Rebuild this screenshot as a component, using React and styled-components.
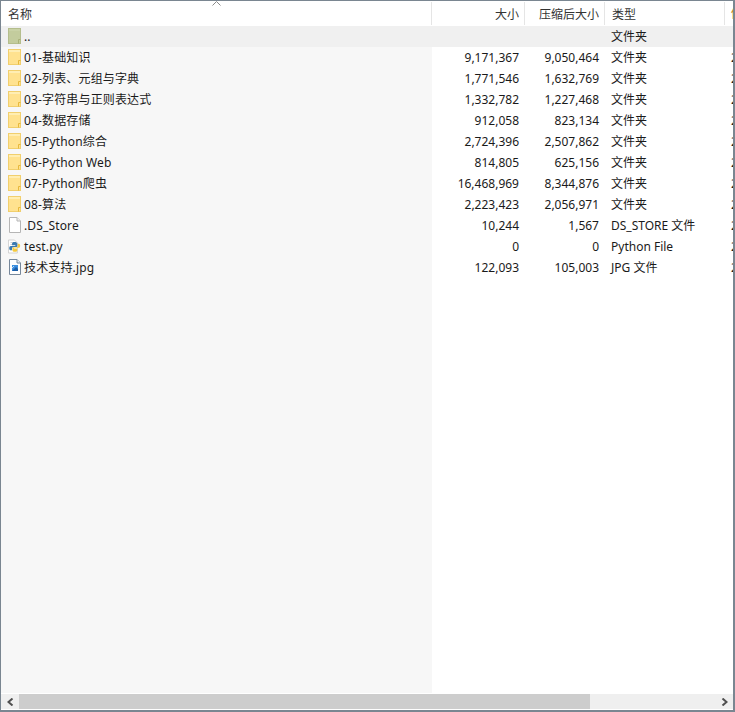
import React from 'react';
import styled, { createGlobalStyle } from 'styled-components';

const GlobalStyle = createGlobalStyle`
  html, body {
    margin: 0;
    padding: 0;
    background: #fff;
  }
  * {
    box-sizing: border-box;
  }
`;

const COLS = '431px 93px 80px 120px 1fr';

const Window = styled.div`
  width: 735px;
  height: 712px;
  display: flex;
  flex-direction: column;
  overflow: hidden;
  background: #fff;
  color: #1a1a1a;
  border: 1px solid #7a8691;
  border-right-width: 2px;
  border-bottom-width: 2px;
  font-family: "Noto Sans", "Noto Sans CJK SC", sans-serif;
  font-size: 12px;
`;

const Header = styled.div`
  display: grid;
  grid-template-columns: ${COLS};
  height: 25px;
  flex: none;
  position: relative;
  background: #fff;
`;

const HeadCell = styled.div`
  display: flex;
  align-items: center;
  justify-content: ${(p) => (p.$right ? 'flex-end' : 'flex-start')};
  padding: ${(p) => (p.$right ? '0 5px 0 0' : '0 0 0 7px')};
  margin-top: 1px;
  margin-bottom: 1px;
  border-right: 1px solid #e5e5e5;
  color: #333;
  white-space: nowrap;
  overflow: hidden;
`;

const SortArrow = styled.svg`
  position: absolute;
  left: 211px;
  top: 0;
`;

const List = styled.div`
  flex: 1;
  min-height: 0;
  background: linear-gradient(to right, #f7f7f7 431px, #fff 431px);
`;

const Row = styled.div`
  display: grid;
  grid-template-columns: ${COLS};
  height: 21px;
  background: ${(p) => (p.$up ? '#f0f0f0' : 'transparent')};
`;

const NameCell = styled.div`
  display: flex;
  align-items: center;
  gap: 3px;
  padding: 0 0 1px 7px;
  white-space: nowrap;
  letter-spacing: 0.15px;
`;

const IconBox = styled.span`
  width: 13px;
  height: 16px;
  flex: none;
  display: flex;
  align-items: center;
  justify-content: center;
`;

const NumCell = styled.div`
  display: flex;
  align-items: center;
  justify-content: flex-end;
  padding: 0 6px 1px 0;
`;

const TypeCell = styled.div`
  display: flex;
  align-items: center;
  padding: 0 0 1px 6px;
  white-space: nowrap;
`;

const ClipCell = styled.div`
  display: flex;
  align-items: center;
  padding: 0 0 1px 6px;
  overflow: hidden;
  white-space: nowrap;
  color: ${(p) => p.$color || 'inherit'};
`;

const Scrollbar = styled.div`
  flex: none;
  height: 15px;
  margin: 1px 0;
  display: flex;
  background: #efefef;
`;

const ScrollButton = styled.div`
  width: 18px;
  flex: none;
  display: flex;
  align-items: center;
  justify-content: center;
`;

const Track = styled.div`
  flex: 1;
  min-width: 0;
`;

const Thumb = styled.div`
  height: 100%;
  width: 571px;
  background: #cdcdcd;
`;

const FolderIcon = ({ up }) => (
  <svg width="13" height="16" viewBox="0 0 13 16">
    <rect x="0.5" y="0.5" width="12" height="15" fill={up ? '#c3cc9d' : '#ffe28f'} stroke={up ? '#b4bd8c' : '#f1cf6d'} />
    <rect x="1" y="1" width="11" height="2" fill={up ? '#c9d2a6' : '#ffeeb3'} />
    <path d="M10.500 15.500V11.500H12.500" fill="none" stroke={up ? '#a8b178' : '#e8b93c'} />
  </svg>
);

const FileIcon = () => (
  <svg width="12" height="16" viewBox="0 0 12 16">
    <path d="M0.500 0.500H8L11.500 4V15.500H0.500Z" fill="#fff" stroke="#b5b5b5" />
    <path d="M8 0.500V4H11.500" fill="#f0f0f0" stroke="#b5b5b5" />
  </svg>
);

const PyIcon = () => (
  <svg width="16" height="17" viewBox="0 0 16 17">
    <path d="M0.500 0.500H8L11.500 4V16.500H0.500Z" fill="#fff" stroke="#c9c9c9" />
    <path d="M3 3.500H6M3 6H5" stroke="#c4c4c4" />
    <path d="M8 3C6 3 5 3.800 5 5V7H9V8H3.500C2.200 8 1.500 9 1.500 10.500C1.500 12 2.200 13 3.500 13H5V11C5 9.800 5.800 9 7 9H10C11 9 11.500 8.500 11.500 7.500V5C11.500 3.800 10 3 8 3Z" fill="#3b7ab0" />
    <path d="M8.500 15C10.500 15 11.500 14.200 11.500 13V11H7.500V10H13C14.300 10 15 9 15 7.500C15 6 14.300 5 13 5H12V7.500C12 8.800 11 9.500 10 9.500H7C6 9.500 5.500 10 5.500 11V13C5.500 14.200 6.500 15 8.500 15Z" fill="#f4c93f" />
  </svg>
);

const JpgIcon = () => (
  <svg width="12" height="16" viewBox="0 0 12 16">
    <path d="M0.500 0.500H8L11.500 4V15.500H0.500Z" fill="#fff" stroke="#76879a" />
    <path d="M8 0.500V4H11.500" fill="#e8eef4" stroke="#76879a" />
    <rect x="3" y="6" width="6" height="6" fill="#3c8fe0" />
    <path d="M3 12L7 8L9 10V12Z" fill="#1d5fa8" />
    <path d="M3 9L5 7" stroke="#bcdcf8" />
  </svg>
);

const rows = [
  { name: '01-基础知识', size: '9,171,367', packed: '9,050,464', type: '文件夹', icon: 'folder' },
  { name: '02-列表、元组与字典', size: '1,771,546', packed: '1,632,769', type: '文件夹', icon: 'folder' },
  { name: '03-字符串与正则表达式', size: '1,332,782', packed: '1,227,468', type: '文件夹', icon: 'folder' },
  { name: '04-数据存储', size: '912,058', packed: '823,134', type: '文件夹', icon: 'folder' },
  { name: '05-Python综合', size: '2,724,396', packed: '2,507,862', type: '文件夹', icon: 'folder' },
  { name: '06-Python Web', size: '814,805', packed: '625,156', type: '文件夹', icon: 'folder' },
  { name: '07-Python爬虫', size: '16,468,969', packed: '8,344,876', type: '文件夹', icon: 'folder' },
  { name: '08-算法', size: '2,223,423', packed: '2,056,971', type: '文件夹', icon: 'folder' },
  { name: '.DS_Store', size: '10,244', packed: '1,567', type: 'DS_STORE 文件', icon: 'file' },
  { name: 'test.py', size: '0', packed: '0', type: 'Python File', icon: 'py' },
  { name: '技术支持.jpg', size: '122,093', packed: '105,003', type: 'JPG 文件', icon: 'jpg' },
];

const icons = {
  folder: <FolderIcon />,
  file: <FileIcon />,
  py: <PyIcon />,
  jpg: <JpgIcon />,
};

const App = () => {
  return (
    <Window>
      <GlobalStyle />
      <Header>
        <HeadCell>名称</HeadCell>
        <HeadCell $right>大小</HeadCell>
        <HeadCell $right>压缩后大小</HeadCell>
        <HeadCell>类型</HeadCell>
        <ClipCell $color="#c98a2b">修改时间</ClipCell>
        <SortArrow width="9" height="5" viewBox="0 0 9 5">
          <path d="M0.500 4.500L4.500 0.500L8.500 4.500" fill="none" stroke="#8a8a8a" />
        </SortArrow>
      </Header>
      <List>
        <Row $up>
          <NameCell>
            <IconBox><FolderIcon up /></IconBox>
            ..
          </NameCell>
          <NumCell />
          <NumCell />
          <TypeCell>文件夹</TypeCell>
          <ClipCell />
        </Row>
        {rows.map((row) => (
          <Row key={row.name}>
            <NameCell>
              <IconBox>{icons[row.icon]}</IconBox>
              {row.name}
            </NameCell>
            <NumCell>{row.size}</NumCell>
            <NumCell>{row.packed}</NumCell>
            <TypeCell>{row.type}</TypeCell>
            <ClipCell>2020</ClipCell>
          </Row>
        ))}
      </List>
      <Scrollbar>
        <ScrollButton>
          <svg width="7" height="8" viewBox="0 0 7 8">
            <path d="M5.500 0.500L1.500 4L5.500 7.500" fill="none" stroke="#505050" strokeWidth="2" />
          </svg>
        </ScrollButton>
        <Track>
          <Thumb />
        </Track>
        <ScrollButton>
          <svg width="7" height="8" viewBox="0 0 7 8">
            <path d="M1.500 0.500L5.500 4L1.500 7.500" fill="none" stroke="#505050" strokeWidth="2" />
          </svg>
        </ScrollButton>
      </Scrollbar>
    </Window>
  );
};

export default App;
